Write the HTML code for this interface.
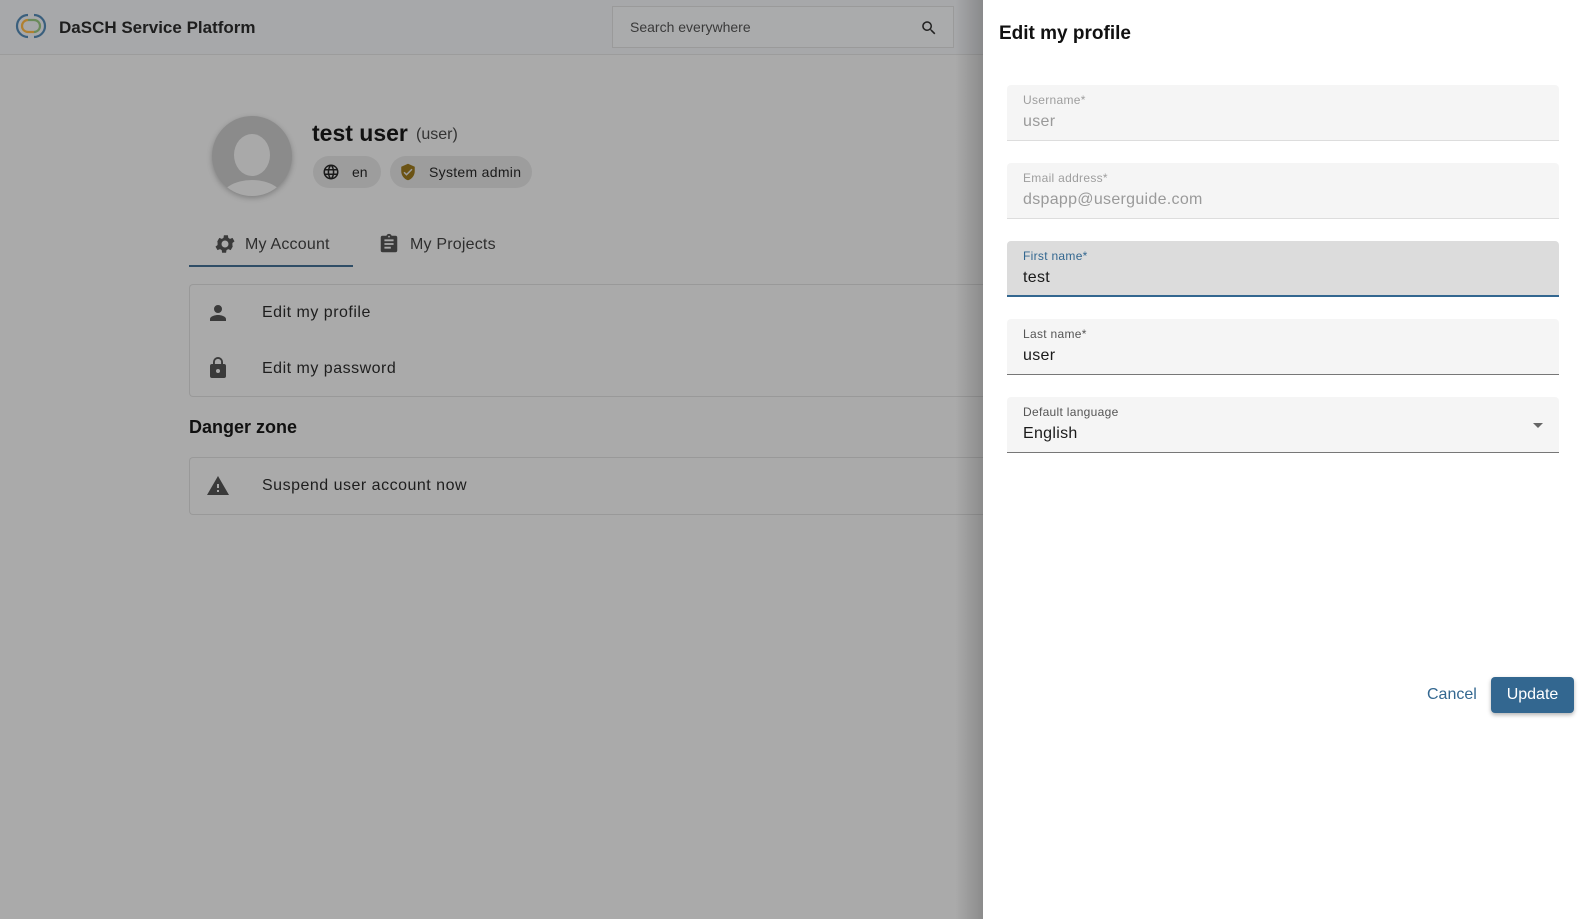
<!DOCTYPE html>
<html><head><meta charset="utf-8">
<style>
*{box-sizing:border-box;margin:0;padding:0}
body{width:1580px;height:919px;overflow:hidden;font-family:"Liberation Sans",sans-serif;background:#aaaaaa;position:relative}
.hdr{position:absolute;left:0;top:0;width:1580px;height:55px;background:#a7a8aa;border-bottom:1px solid #9c9c9c}
.logo{position:absolute;left:14px;top:12px}
.title{position:absolute;left:59px;top:18px;font-size:17px;font-weight:bold;color:#1e1e1e}
.search{position:absolute;left:612px;top:6px;width:342px;height:42px;border:1px solid #9a9a9a;background:#aaabac}
.search span{position:absolute;left:17px;top:12px;font-size:14px;color:#3a3a3a}
.av{position:absolute;left:212px;top:116px;width:80px;height:80px;border-radius:50%;background:#8b8b8b;overflow:hidden;box-shadow:0 2px 6px rgba(0,0,0,.25)}
.name{position:absolute;left:312px;top:120px;font-size:23px;font-weight:bold;color:#111}
.role{position:absolute;left:416px;top:126px;font-size:16px;color:#333}
.chip{position:absolute;top:156px;height:32px;border-radius:16px;background:#9d9d9d;font-size:14px;color:#1a1a1a}
.tab{position:absolute;top:236px;font-size:16px;color:#2e2e2e;letter-spacing:.2px}
.box{position:absolute;left:189px;width:800px;border:1px solid #999;border-right:none;border-radius:4px 0 0 4px}
.it{position:absolute;left:72px;font-size:16px;color:#1e1e1e;letter-spacing:.5px}
.dz{position:absolute;left:189px;top:417px;font-size:18px;font-weight:bold;color:#111}
.shade{position:absolute;left:955px;top:0;width:28px;height:919px;background:linear-gradient(to right,rgba(0,0,0,0),rgba(0,0,0,.18))}
.panel{position:absolute;left:983px;top:0;width:597px;height:919px;background:#fff}
.ph{position:absolute;left:16px;top:23px;font-size:19px;font-weight:bold;color:#111}
.f{position:absolute;left:24px;width:552px;height:56px;background:#f5f5f5;border-radius:4px 4px 0 0;border-bottom:1px solid #ddd}
.f .l{position:absolute;left:16px;top:8px;font-size:12px;color:#9e9e9e;letter-spacing:.3px}
.f .v{position:absolute;left:16px;top:28px;font-size:16px;color:#9a9a9a;letter-spacing:.3px}
.cancel{position:absolute;left:1427px;top:686px;font-size:16px;color:#336790}
.upd{position:absolute;left:1491px;top:677px;width:83px;height:36px;background:#336790;border-radius:4px;color:#fff;font-size:16px;text-align:center;line-height:36px;box-shadow:0 2px 4px rgba(0,0,0,.3)}
</style></head><body>
<div class="hdr">
 <svg class="logo" width="34" height="28" viewBox="0 0 34 28"><g fill="none" stroke-width="2.2"><path d="M14 3 A11 11 0 1 0 14 25" stroke="#3a5f7d"/><path d="M20 3 A11 11 0 1 1 20 25" stroke="#3a5f7d"/><path d="M14 8 A6 6 0 1 0 14 20 H20" stroke="#b08030"/><path d="M20 20 A6 6 0 1 0 20 8 H14" stroke="#6a8a5a"/></g></svg>
 <div class="title">DaSCH Service Platform</div>
 <div class="search"><span>Search everywhere</span>
 <svg style="position:absolute;left:307px;top:12px" width="18" height="18" viewBox="0 0 24 24"><path fill="#222" d="M15.5 14h-.8l-.3-.3A6.5 6.5 0 1 0 9.5 16a6.5 6.5 0 0 0 4.2-1.6l.3.3v.8l5 5 1.5-1.5-5-5zm-6 0A4.5 4.5 0 1 1 14 9.5 4.5 4.5 0 0 1 9.5 14z"/></svg></div>
</div>
<div class="av"><div style="position:absolute;left:22px;top:18px;width:36px;height:42px;border-radius:50%;background:#a9a9a9"></div><div style="position:absolute;left:8px;top:64px;width:64px;height:40px;border-radius:50%;background:#a9a9a9"></div></div>
<div class="name">test user</div><div class="role">(user)</div>
<div class="chip" style="left:313px;width:68px"><svg style="position:absolute;left:9px;top:7px" width="18" height="18" viewBox="0 0 24 24"><path fill="#1a1a1a" d="M12 2a10 10 0 1 0 0 20 10 10 0 0 0 0-20zm6.9 6h-3a15.7 15.7 0 0 0-1.4-3.6A8 8 0 0 1 18.9 8zM12 4c.8 1.2 1.5 2.5 1.9 4h-3.800c.4-1.4 1.1-2.8 1.9-4zM4.3 14a8 8 0 0 1 0-4h3.4a16 16 0 0 0 0 4H4.3zm.8 2h3c.3 1.3.8 2.5 1.4 3.6A8 8 0 0 1 5.1 16zm3-8h-3a8 8 0 0 1 4.3-3.6C8.9 5.5 8.4 6.7 8.1 8zM12 20c-.8-1.200-1.5-2.500-1.9-4h3.8c-.4 1.4-1.1 2.8-1.9 4zm2.3-6H9.7a14.7 14.7 0 0 1 0-4h4.6a14.7 14.7 0 0 1 0 4zm.3 5.6c.6-1.1 1.1-2.3 1.4-3.6h3a8 8 0 0 1-4.4 3.6zM16.3 14a16 16 0 0 0 0-4h3.4a8 8 0 0 1 0 4h-3.4z"/></svg><span style="position:absolute;left:39px;top:8px">en</span></div>
<div class="chip" style="left:390px;width:142px"><svg style="position:absolute;left:9px;top:7px" width="18" height="18" viewBox="0 0 24 24"><path fill="#6b5314" d="M12 1L3 5v6c0 5.5 3.8 10.7 9 12 5.2-1.3 9-6.5 9-12V5l-9-4zm-2 16l-4-4 1.4-1.4 2.6 2.6 6.6-6.6L18 9l-8 8z"/></svg><span style="position:absolute;left:39px;top:8px;letter-spacing:.3px">System admin</span></div>
<svg style="position:absolute;left:213px;top:232px" width="24" height="24" viewBox="0 0 24 24"><path fill="#3a3a3a" d="M19.4 13a7.8 7.8 0 0 0 0-2l2.1-1.6-2-3.5-2.5 1a7.3 7.3 0 0 0-1.7-1l-.4-2.6h-4l-.4 2.6a7.3 7.3 0 0 0-1.7 1l-2.5-1-2 3.5L4.6 11a7.8 7.8 0 0 0 0 2l-2.1 1.6 2 3.5 2.5-1c.5.4 1.1.7 1.7 1l.4 2.6h4l.4-2.6c.6-.3 1.2-.6 1.7-1l2.5 1 2-3.5L19.4 13zM12 15.5a3.5 3.5 0 1 1 0-7 3.5 3.5 0 0 1 0 7z"/></svg>
<div class="tab" style="left:245px">My Account</div>
<div style="position:absolute;left:189px;top:265px;width:164px;height:2px;background:#2f4d66"></div>
<svg style="position:absolute;left:378px;top:233px" width="22" height="22" viewBox="0 0 24 24"><path fill="#3a3a3a" d="M19 3h-4.2A3 3 0 0 0 12 1a3 3 0 0 0-2.8 2H5a2 2 0 0 0-2 2v14a2 2 0 0 0 2 2h14a2 2 0 0 0 2-2V5a2 2 0 0 0-2-2zm-7 0a1 1 0 1 1 0 2 1 1 0 0 1 0-2zm2 14H7v-2h7v2zm3-4H7v-2h10v2zm0-4H7V7h10v2z"/></svg>
<div class="tab" style="left:410px">My Projects</div>
<div class="box" style="top:284px;height:113px">
 <svg style="position:absolute;left:16px;top:16px" width="24" height="24" viewBox="0 0 24 24"><path fill="#3a3a3a" d="M12 12a4 4 0 1 0 0-8 4 4 0 0 0 0 8zm0 2c-2.7 0-8 1.3-8 4v2h16v-2c0-2.7-5.3-4-8-4z"/></svg>
 <div class="it" style="top:19px">Edit my profile</div>
 <svg style="position:absolute;left:16px;top:71px" width="24" height="24" viewBox="0 0 24 24"><path fill="#3a3a3a" d="M18 8h-1V6a5 5 0 0 0-10 0v2H6a2 2 0 0 0-2 2v10a2 2 0 0 0 2 2h12a2 2 0 0 0 2-2V10a2 2 0 0 0-2-2zm-6 9a2 2 0 1 1 0-4 2 2 0 0 1 0 4zm3.1-9H8.9V6a3.1 3.1 0 0 1 6.2 0v2z"/></svg>
 <div class="it" style="top:75px">Edit my password</div>
</div>
<div class="dz">Danger zone</div>
<div class="box" style="top:457px;height:58px">
 <svg style="position:absolute;left:16px;top:16px" width="24" height="24" viewBox="0 0 24 24"><path fill="#3a3a3a" d="M1 21h22L12 2 1 21zm12-3h-2v-2h2v2zm0-4h-2v-4h2v4z"/></svg>
 <div class="it" style="top:19px">Suspend user account now</div>
</div>
<div class="shade"></div>
<div class="panel">
 <div class="ph">Edit my profile</div>
 <div class="f" style="top:85px"><div class="l">Username*</div><div class="v">user</div></div>
 <div class="f" style="top:163px"><div class="l">Email address*</div><div class="v">dspapp@userguide.com</div></div>
 <div class="f" style="top:241px;background:#dcdcdc;border-bottom:2px solid #336790"><div class="l" style="color:#336790">First name*</div><div class="v" style="color:#1a1a1a">test</div></div>
 <div class="f" style="top:319px;border-bottom:1px solid #777"><div class="l" style="color:#555">Last name*</div><div class="v" style="color:#1a1a1a">user</div></div>
 <div class="f" style="top:397px;border-bottom:1px solid #777"><div class="l" style="color:#555">Default language</div><div class="v" style="color:#1a1a1a">English</div><div style="position:absolute;right:16px;top:26px;width:0;height:0;border-left:5px solid transparent;border-right:5px solid transparent;border-top:5px solid #666"></div></div>
</div>
<div class="cancel">Cancel</div>
<div class="upd">Update</div>
</body></html>
